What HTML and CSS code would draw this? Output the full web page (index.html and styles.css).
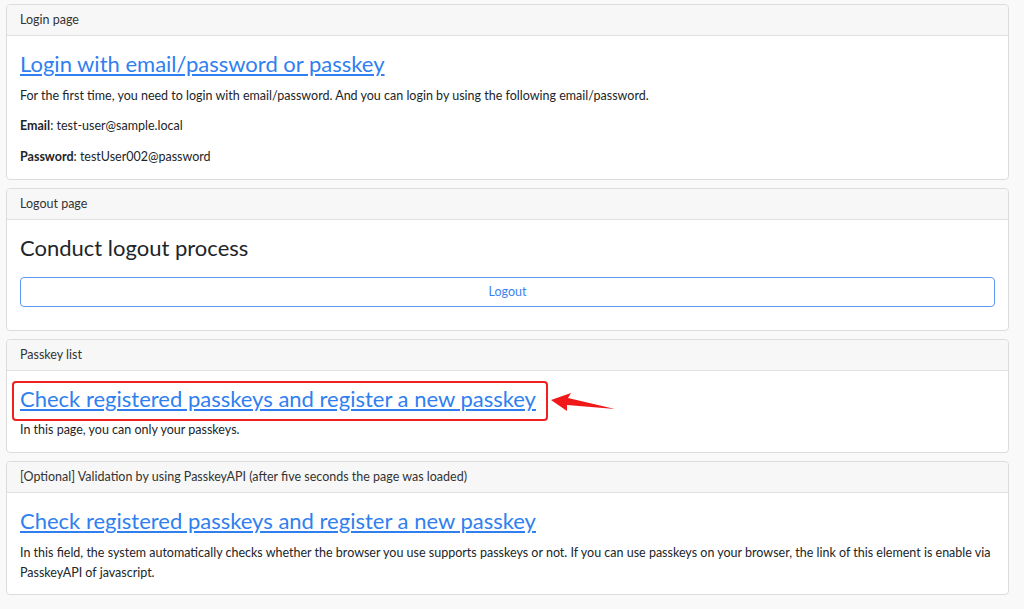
FILE: index.html
```html
<!DOCTYPE html>
<html lang="en">
<head>
  <meta charset="UTF-8" />
  <meta name="viewport" content="width=device-width, initial-scale=1.0" />
  <title>Passkey sample</title>
  <link rel="stylesheet" href="styles.css">
</head>
<body>
  <div class="card">
    <div class="card-header">Login page</div>
    <div class="card-body">
      <h2 class="link-title"><a href="#">Login with email/password or passkey</a></h2>
      <p>For the first time, you need to login with email/password. And you can login by using the following email/password.</p>
      <p><b>Email</b>: test-user@sample.local</p>
      <p class="last"><b>Password</b>: testUser002@password</p>
    </div>
  </div>

  <div class="card">
    <div class="card-header">Logout page</div>
    <div class="card-body">
      <h3 class="plain-title">Conduct logout process</h3>
      <button class="btn-outline">Logout</button>
    </div>
  </div>

  <div class="card">
    <div class="card-header">Passkey list</div>
    <div class="card-body">
      <h2 class="link-title"><span class="marked"><a href="#">Check registered passkeys and register a new passkey</a>
        <svg class="arrow" width="70" height="24" viewBox="0 0 70 24">
          <polygon points="2,10 22,3 19,8 66,19 18,15 18,21" fill="#f01818"/>
        </svg></span></h2>
      <p class="last">In this page, you can only your passkeys.</p>
    </div>
  </div>

  <div class="card">
    <div class="card-header">[Optional] Validation by using PasskeyAPI (after five seconds the page was loaded)</div>
    <div class="card-body tight">
      <h2 class="link-title"><a href="#">Check registered passkeys and register a new passkey</a></h2>
      <p class="last wrap">In this field, the system automatically checks whether the browser you use supports passkeys or not. If you can use passkeys on your browser, the link of this element is enable via PasskeyAPI of javascript.</p>
    </div>
  </div>
</body>
</html>
```

FILE: styles.css
```css
body {
  margin: 0;
  padding: 4px 15px 10px 6px;
  background: #f9f9f9;
  font-family: Lato, 'Open Sans', sans-serif;
  font-size: 12.5px;
  color: #212529;
}
.card {
  background: #fff;
  border: 1px solid #dcdcdc;
  border-radius: 4px;
  margin-bottom: 8px;
}
.card-header {
  background: #f7f7f7;
  border-bottom: 1px solid #e0e0e0;
  border-radius: 4px 4px 0 0;
  padding: 6px 13px;
  line-height: 18px;
  color: #333;
}
.card-body {
  padding: 14px 13px 13px;
}
.card-body.tight {
  padding-bottom: 11px;
}
.link-title {
  font-size: 22px;
  font-weight: 400;
  line-height: 28px;
  margin: 0 0 7.5px;
}
.link-title a {
  color: #2f7ff0;
}
p {
  margin: 0 0 11.5px;
  line-height: 19px;
}
p.last {
  margin-bottom: 0;
}
p.wrap {
  line-height: 20px;
}
.plain-title {
  font-size: 22px;
  font-weight: 400;
  line-height: 28px;
  margin: 0 0 15px;
}
.btn-outline {
  display: block;
  width: 100%;
  height: 30px;
  font-family: Lato, 'Open Sans', sans-serif;
  font-size: 12.5px;
  color: #3b82f2;
  background: #fff;
  border: 1px solid #5b98f5;
  border-radius: 4px;
  margin-bottom: 10px;
}
.marked {
  position: relative;
  display: inline-block;
}
.marked::before {
  content: "";
  position: absolute;
  left: -8px;
  right: -12px;
  top: -4px;
  bottom: -8px;
  border: 2px solid #f02020;
  border-radius: 4px;
}
.arrow {
  position: absolute;
  left: calc(100% + 13px);
  top: 5px;
}
```
